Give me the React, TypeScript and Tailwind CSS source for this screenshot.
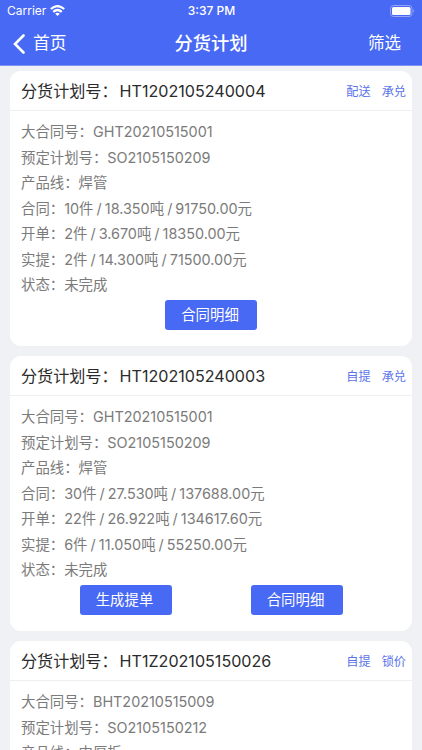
import { clsx } from 'clsx';

type Plan = { no: string; tags: string[]; actions: string[]; rows: string[][] };

const plans: Plan[] = [
  {
    no: 'HT1202105240004', tags: ['配送', '承兑'], actions: ['合同明细'],
    rows: [
      ['大合同号：', 'GHT20210515001'],
      ['预定计划号：', 'SO2105150209'],
      ['产品线：', '焊管'],
      ['合同：', '10件 / 18.350吨 / 91750.00元'],
      ['开单：', '2件 / 3.670吨 / 18350.00元'],
      ['实提：', '2件 / 14.300吨 / 71500.00元'],
      ['状态：', '未完成'],
    ],
  },
  {
    no: 'HT1202105240003', tags: ['自提', '承兑'], actions: ['生成提单', '合同明细'],
    rows: [
      ['大合同号：', 'GHT20210515001'],
      ['预定计划号：', 'SO2105150209'],
      ['产品线：', '焊管'],
      ['合同：', '30件 / 27.530吨 / 137688.00元'],
      ['开单：', '22件 / 26.922吨 / 134617.60元'],
      ['实提：', '6件 / 11.050吨 / 55250.00元'],
      ['状态：', '未完成'],
    ],
  },
  {
    no: 'HT1Z202105150026', tags: ['自提', '锁价'], actions: [],
    rows: [
      ['大合同号：', 'BHT20210515009'],
      ['预定计划号：', 'SO2105150212'],
      ['产品线：', '中厚板'],
    ],
  },
];

function Card({ plan }: { plan: Plan }) {
  return (
    <section className="h-[275px] shrink-0 overflow-hidden rounded-[11px] bg-white">
      <div className="flex h-[40px] items-center justify-between border-b border-[#eeeeee] pl-[11px] pr-[6px] pt-px">
        <h2 className="whitespace-nowrap text-[16.1px] text-[#2b2b2b]">
          <span>分货计划号：</span>
          <span className="ml-[2px]">{plan.no}</span>
        </h2>
        <div className="flex gap-[11px] pt-[3px] text-[12.2px] text-[#5a73ea]">
          {plan.tags.map((t) => <span key={t}>{t}</span>)}
        </div>
      </div>
      <div className="pl-[11px] pt-[8.5px] text-[14.4px] text-[#7b7b7b]">
        {plan.rows.map(([k, v]) => (
          <div key={k} className={clsx('flex h-[25.5px] items-center whitespace-nowrap', v.includes('/') && '[word-spacing:-1px]')}>
            <span>{k}</span>
            <span>{v}</span>
          </div>
        ))}
      </div>
      <div className="mt-[1.5px] flex justify-center gap-[79px]">
        {plan.actions.map((a) => (
          <button key={a} className="h-[30px] w-[92px] rounded-[3px] bg-[#4869f4] pr-[2px] pt-px text-[14.4px] text-white">{a}</button>
        ))}
      </div>
    </section>
  );
}

export default function App() {
  return (
    <div className="flex h-[750px] w-[422px] flex-col overflow-hidden bg-[#f0f1f4] font-['Inter','Noto_Sans_CJK_SC',sans-serif]">
      <header className="h-[66px] shrink-0 border-b border-[#7f95f6] bg-[#4869f4] text-white">
        <div className="grid h-[21px] grid-cols-3 items-center px-[7px] text-[12px]">
          <div className="flex items-center gap-[4px]">
            <span>Carrier</span>
            <svg width="15" height="11" viewBox="0 0 15 11" fill="none" stroke="currentColor" strokeWidth="2.2">
              <path d="M.8 4Q7.5-1.8 14.2 4" />
              <path d="M3.2 6.8Q7.5 3.2 11.8 6.8" />
              <path d="M5.2 8.7Q7.5 6.8 9.8 8.7L7.5 11Z" fill="currentColor" stroke="none" />
            </svg>
          </div>
          <span className="pl-px text-center font-medium">3:37 PM</span>
          <svg className="justify-self-end" width="25" height="12" viewBox="0 0 25 12" fill="none">
            <rect x=".5" y=".5" width="21.5" height="11" rx="3" stroke="#92a5f8" />
            <rect x="2" y="2" width="18.5" height="8" rx="1.5" fill="white" />
            <path d="M23.3 4Q25.2 6 23.3 8Z" fill="#92a5f8" />
          </svg>
        </div>
        <div className="grid h-[45px] grid-cols-3 items-center pl-[13px] pr-[21px]">
          <div className="flex items-center gap-[8px] text-[16.8px]">
            <svg width="12" height="20" viewBox="0 0 12 20" fill="none" stroke="currentColor" strokeWidth="2.6" strokeLinecap="round">
              <path d="M10.5 1.5L2 10L10.5 18.5" />
            </svg>
            <span>首页</span>
          </div>
          <h1 className="pl-[8px] text-center text-[18.3px] font-medium">分货计划</h1>
          <span className="text-right text-[16.5px]">筛选</span>
        </div>
      </header>
      <main className="flex flex-col gap-[10px] px-[10px] pt-[5px]">
        {plans.map((p) => <Card key={p.no} plan={p} />)}
      </main>
    </div>
  );
}
